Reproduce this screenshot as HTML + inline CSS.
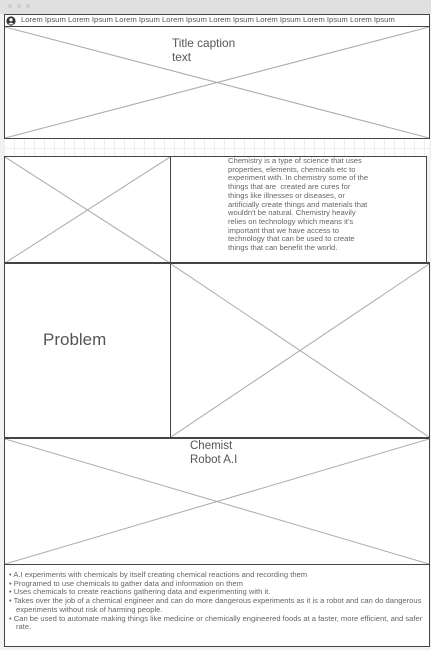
<!DOCTYPE html>
<html><head><meta charset="utf-8"><style>
*{margin:0;padding:0;box-sizing:border-box}
body{width:431px;height:650px;position:relative;overflow:hidden;background:#f2f2f2;font-family:"Liberation Sans",sans-serif;color:#555}
.b{position:absolute;background:#fff;border:1px solid #444}
.b svg{position:absolute;left:0;top:0;width:100%;height:100%}
.t{position:absolute}
li{padding-left:7px;text-indent:-7px}
</style></head><body>
<div style="position:absolute;left:0;top:0;width:431px;height:14px;background:#e0e0e0"></div>
<div style="position:absolute;left:8px;top:4px;width:4px;height:4px;border-radius:50%;background:#ccc"></div>
<div style="position:absolute;left:17px;top:4px;width:4px;height:4px;border-radius:50%;background:#ccc"></div>
<div style="position:absolute;left:26px;top:4px;width:4px;height:4px;border-radius:50%;background:#ccc"></div>
<div style="position:absolute;left:4px;top:138px;width:425px;height:18px;background:#fff;background-image:linear-gradient(#eee 1px,transparent 1px),linear-gradient(90deg,#eee 1px,transparent 1px);background-size:10px 10px"></div>

<div class="b" style="left:4px;top:14px;width:426px;height:13px;border-width:1px 1px 0 1px">
<svg viewBox="0 0 12 12" style="width:10px;height:10px;left:1px;top:1px"><circle cx="6" cy="6" r="5.5" fill="#333"/><circle cx="6" cy="4.5" r="2" fill="#fff"/><path d="M2.5 10 Q6 6 9.5 10Z" fill="#fff"/></svg>
<div class="t" style="left:16px;top:0px;font-size:7.7px;color:#555;white-space:nowrap">Lorem Ipsum Lorem Ipsum Lorem Ipsum Lorem Ipsum Lorem Ipsum Lorem Ipsum Lorem Ipsum Lorem Ipsum</div>
</div>

<div class="b" style="left:4px;top:26px;width:426px;height:113px">
<svg viewBox="0 0 100 100" preserveAspectRatio="none"><path d="M0 0L100 100M100 0L0 100" stroke="#aaa" stroke-width="1" vector-effect="non-scaling-stroke"/></svg>
<div class="t" style="left:167px;top:9px;font-size:11.8px;line-height:14px">Title caption<br>text</div>
</div>

<div class="b" style="left:4px;top:156px;width:167px;height:108px">
<svg viewBox="0 0 100 100" preserveAspectRatio="none"><path d="M0 0L100 100M100 0L0 100" stroke="#aaa" stroke-width="1" vector-effect="non-scaling-stroke"/></svg>
</div>
<div class="b" style="left:170px;top:156px;width:257px;height:108px">
<div class="t" style="left:57px;top:0px;white-space:nowrap;font-size:7.6px;line-height:8.7px;color:#666">Chemistry is a type of science that uses<br>properties, elements, chemicals etc to<br>experiment with. In chemistry some of the<br>things that are&nbsp; created are cures for<br>things like illnesses or diseases, or<br>artificially create things and materials that<br>wouldn't be natural. Chemistry heavily<br>relies on technology which means it's<br>important that we have access to<br>technology that can be used to create<br>things that can benefit the world.</div>
</div>

<div class="b" style="left:4px;top:262px;width:167px;height:176px;border-width:2px 1px 1px 1px">
<div class="t" style="left:38px;top:66px;font-size:17px">Problem</div>
</div>
<div class="b" style="left:170px;top:262px;width:260px;height:176px;border-width:2px 1px 1px 1px">
<svg viewBox="0 0 100 100" preserveAspectRatio="none"><path d="M0 0L100 100M100 0L0 100" stroke="#aaa" stroke-width="1" vector-effect="non-scaling-stroke"/></svg>
</div>

<div class="b" style="left:4px;top:437px;width:426px;height:128px;border-width:2px 1px 1px 1px">
<svg viewBox="0 0 100 100" preserveAspectRatio="none"><path d="M0 0L100 100M100 0L0 100" stroke="#aaa" stroke-width="1" vector-effect="non-scaling-stroke"/></svg>
<div class="t" style="left:185px;top:0px;font-size:11.5px;line-height:14px">Chemist<br>Robot A.I</div>
</div>

<div class="b" style="left:4px;top:564px;width:426px;height:83px">
<ul style="position:absolute;left:4px;top:6px;width:420px;font-size:7.6px;line-height:8.7px;color:#666;list-style:none">
<li>• A.I experiments with chemicals by itself creating chemical reactions and recording them</li>
<li>• Programed to use chemicals to gather data and information on them</li>
<li>• Uses chemicals to create reactions gathering data and experimenting with it.</li>
<li>• Takes over the job of a chemical engineer and can do more dangerous experiments as it is a robot and can do dangerous experiments without risk of harming people.</li>
<li>• Can be used to automate making things like medicine or chemically engineered foods at a faster, more efficient, and safer rate.</li>
</ul>
</div>
</body></html>
